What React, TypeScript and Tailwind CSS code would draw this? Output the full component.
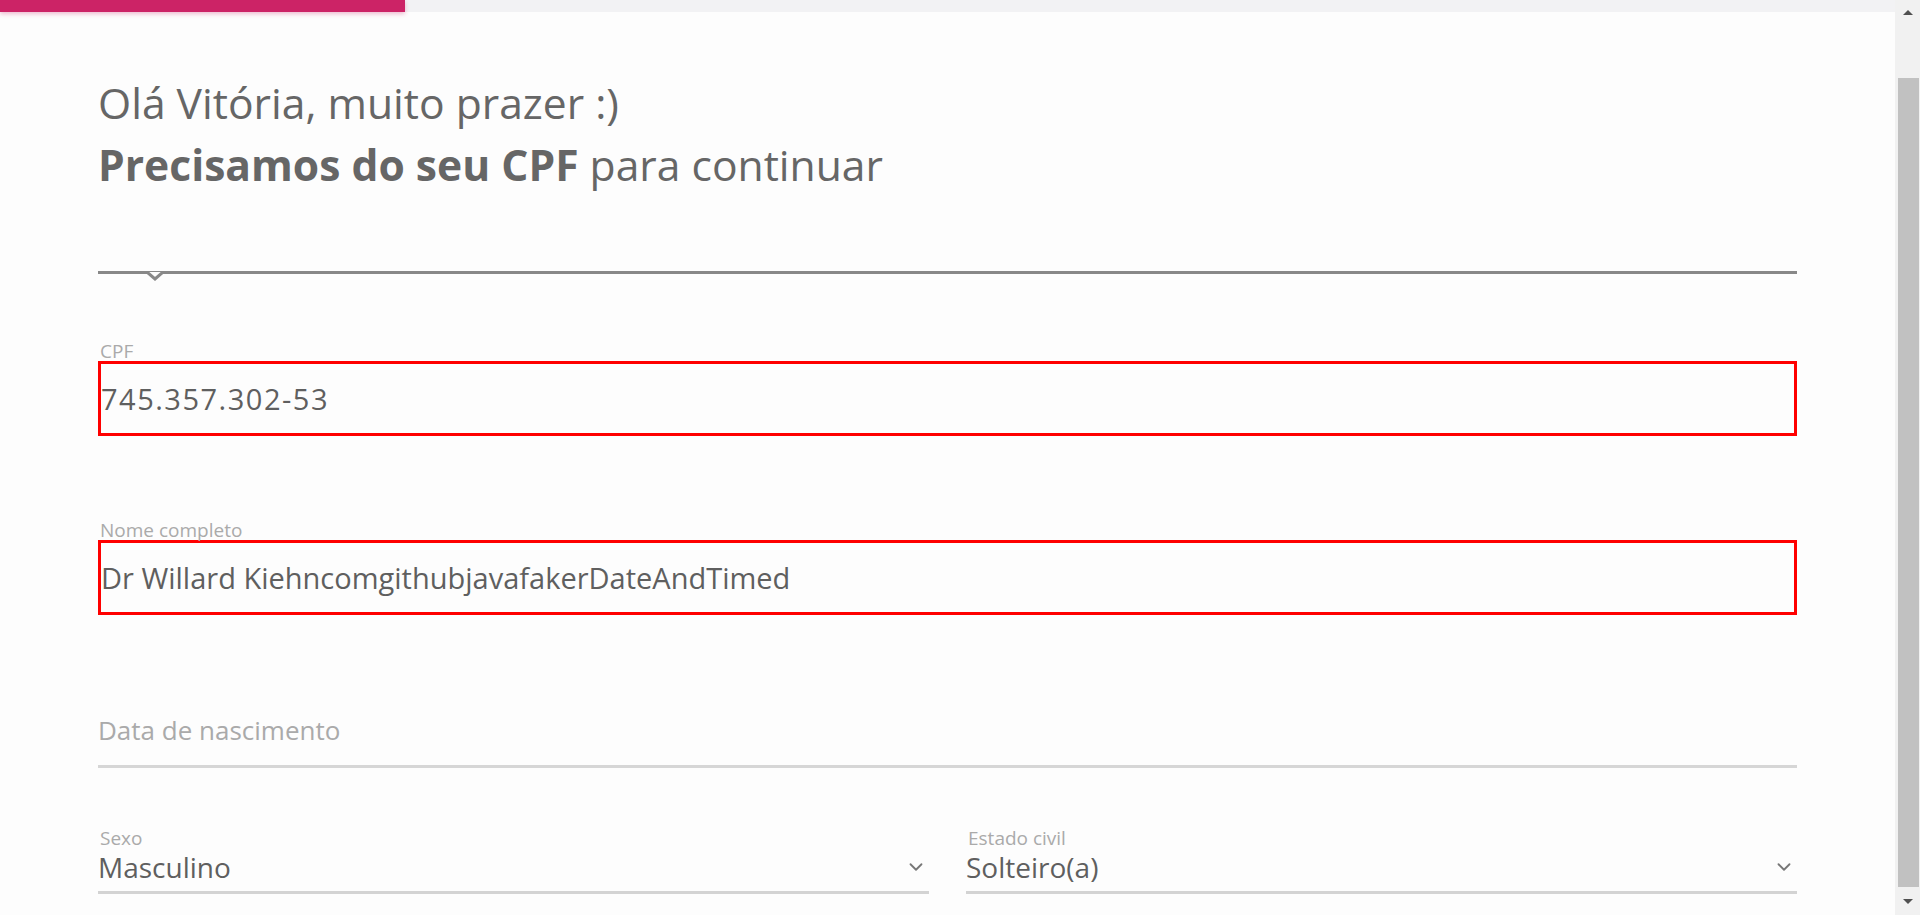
import { ChevronDown } from "lucide-react";

const font = { fontFamily: '"Open Sans", "Noto Sans", sans-serif' };

const BoxedField = ({
  label,
  value,
  valueClass,
}: {
  label: string;
  value: string;
  valueClass: string;
}) => {
  return (
    <div>
      <label className="block pl-[2px] text-[19px] leading-[20px] text-[#aaaaaa]">
        {label}
      </label>
      <div
        className={`flex h-[75px] items-center border-[3px] border-[#ff0000] text-[#5f5f5f] ${valueClass}`}
      >
        {value}
      </div>
    </div>
  );
};

const SelectField = ({ label, value }: { label: string; value: string }) => {
  return (
    <div>
      <label className="block pl-[2px] text-[19px] leading-[22px] text-[#aaaaaa]">
        {label}
      </label>
      <div className="flex items-center justify-between border-b-[3px] border-[#d3d3d3] pb-[6px]">
        <span className="text-[28px] leading-[36px] text-[#5f5f5f]">
          {value}
        </span>
        <ChevronDown size={22} strokeWidth={2} color="#777777" className="mr-[2px]" />
      </div>
    </div>
  );
};

const Scrollbar = () => {
  return (
    <div className="flex w-[25px] flex-col items-center bg-[#f1f1f1]">
      <div className="flex h-[78px] w-full justify-center pt-[10px]">
        <div className="h-0 w-0 border-x-[5px] border-b-[5px] border-x-transparent border-b-[#505050]" />
      </div>
      <div className="ml-[2px] h-[809px] w-[21px] bg-[#c1c1c1]" />
      <div className="flex flex-1 w-full justify-center pt-[12px]">
        <div className="h-0 w-0 border-x-[5px] border-t-[5px] border-x-transparent border-t-[#505050]" />
      </div>
    </div>
  );
};

export default function App() {
  return (
    <div className="flex h-[915px] w-full overflow-hidden bg-[#fdfdfd]" style={font}>
      <div className="flex flex-1 flex-col">
        <div className="h-[12px] bg-[#f2f2f4]">
          <div className="h-full w-[405px] bg-[#cc2366] shadow-[0_2px_4px_rgba(204,35,102,0.3)]" />
        </div>

        <div className="px-[98px]">
          <h1 className="mt-[59px] text-[42.6px] leading-[62px] text-[#666666]">
            Olá Vitória, muito prazer :)
            <br />
            <span className="font-bold">Precisamos do seu CPF</span> para continuar
          </h1>

          <div className="relative mt-[76px] h-[3px] bg-[#888888]">
            <svg
              className="absolute left-[48px] top-[1px]"
              width="18"
              height="10"
              viewBox="0 0 18 10"
            >
              <path d="M1 0 L9 7 L17 0" fill="#fdfdfd" stroke="#888888" strokeWidth="3" />
            </svg>
          </div>

          <div className="mt-[67px]">
            <BoxedField
              label="CPF"
              value="745.357.302-53"
              valueClass="text-[29px] tracking-[1.5px]"
            />
          </div>

          <div className="mt-[84px]">
            <BoxedField
              label="Nome completo"
              value="Dr Willard KiehncomgithubjavafakerDateAndTimed"
              valueClass="text-[29px]"
            />
          </div>

          <div className="mt-[95px] border-b-[3px] border-[#d6d6d6] pb-[15px]">
            <span className="text-[26px] leading-[40px] text-[#aaaaaa]">
              Data de nascimento
            </span>
          </div>

          <div className="mt-[59px] grid grid-cols-2 gap-x-[37px]">
            <SelectField label="Sexo" value="Masculino" />
            <SelectField label="Estado civil" value="Solteiro(a)" />
          </div>
        </div>
      </div>
      <Scrollbar />
    </div>
  );
}
